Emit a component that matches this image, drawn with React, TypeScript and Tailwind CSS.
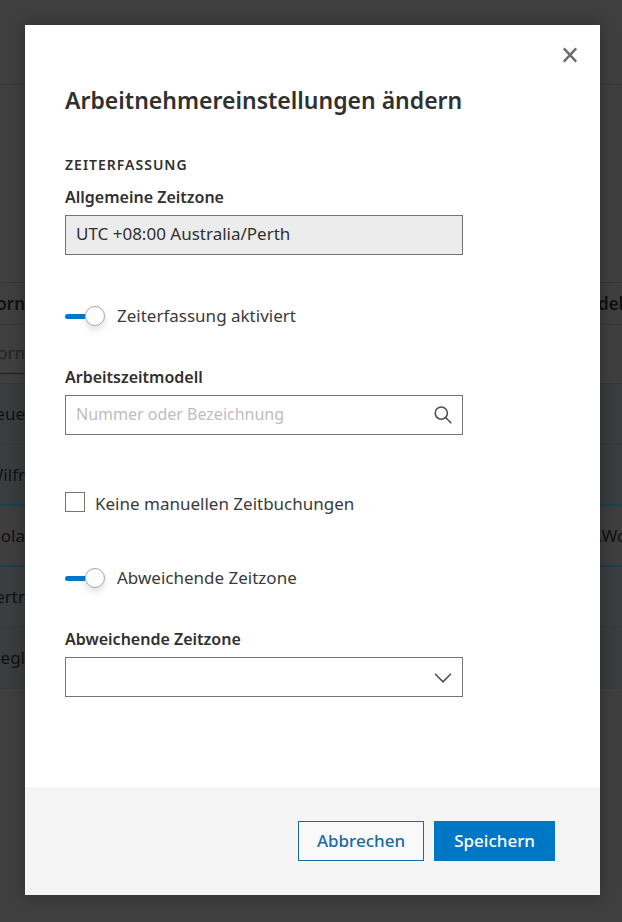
import { useState } from "react";
import { clsx } from "clsx";

const rows = [
  { name: "eue", model: "", tone: "bg-[#3a3d3f]", line: "border-[#383a3c]" },
  { name: "Wilfr", model: "", tone: "bg-[#3a3d3f]", line: "border-[#1b3e54]" },
  { name: "ola", model: ".Wo", tone: "bg-[#3e3e3e]", line: "border-[#1b3e54]" },
  { name: "ertr", model: "", tone: "bg-[#3b3d3f]", line: "border-[#383a3c]" },
  { name: "iegl", model: "", tone: "bg-[#3a3c3f]", line: "border-[#383a3c]" },
];

function EmployeeTable() {
  return (
    <div aria-hidden="true" className="min-h-screen overflow-hidden bg-[#3f3f3f] text-[17px] leading-6 text-[#101010]">
      <div className="h-[85px] border-b border-[#343434]" />
      <div className="mt-[197px] flex h-[43px] items-center justify-between border-y border-[#353535] font-semibold">
        <span className="flex w-[25px] justify-end">orn</span>
        <span className="w-6">del</span>
      </div>
      <div className="flex h-[59px] items-start border-b border-[#353535]">
        <span className="flex h-[49px] w-[25px] items-center justify-end border-b border-[#1c1c1c] pt-2 text-[#242424]">
          orn
        </span>
      </div>
      {rows.map((row) => (
        <div key={row.name} className={clsx("flex h-[61px] items-center justify-between border-b-2", row.tone, row.line)}>
          <span className="flex w-[25px] justify-end">{row.name}</span>
          <span className="w-6">{row.model}</span>
        </div>
      ))}
    </div>
  );
}

function Toggle({ id, label, checked, onChange }: { id: string; label: string; checked: boolean; onChange: (v: boolean) => void }) {
  return (
    <label htmlFor={id} className="flex w-fit cursor-pointer items-center gap-3">
      <input
        id={id}
        type="checkbox"
        role="switch"
        checked={checked}
        onChange={(e) => onChange(e.target.checked)}
        className="peer sr-only"
      />
      <span className={clsx("flex h-5 w-10 items-center", !checked && "flex-row-reverse")}>
        <span className={clsx("h-[5px] w-5 rounded-l-full", checked ? "bg-[#0077c5]" : "bg-[#b5b5b5]")} />
        <span className="h-5 w-5 rounded-full border border-[#a8a8a8] bg-white shadow-[0_4px_7px_rgba(0,0,0,0.12)]" />
      </span>
      {label}
    </label>
  );
}

const labelClass = "block text-base leading-6 font-semibold text-[#303030]";
const fieldClass =
  "block h-10 w-full appearance-none rounded-none border border-[#757575] px-2.5 pb-1 text-[17px] outline-none focus:border-[#0077c5]";

export default function App() {
  const [tracking, setTracking] = useState(true);
  const [ownZone, setOwnZone] = useState(true);

  return (
    <div className="relative font-['Noto_Sans',sans-serif]">
      <EmployeeTable />

      <div className="absolute inset-0 pt-[25px] pr-[22px] pl-[25px]">
        <form
          role="dialog"
          aria-labelledby="dialog-title"
          onSubmit={(e) => e.preventDefault()}
          className="bg-white text-[17px] leading-6 text-[#3a3a3a] shadow-[0_0_16px_rgba(0,0,0,0.3)]"
        >
          <div className="flex justify-end px-4 pt-4">
            <button type="button" aria-label="Schließen" className="flex h-7 w-7 items-center justify-center text-[#6b6b6b]">
              <svg viewBox="0 0 16 16" className="h-4 w-4" fill="none" stroke="currentColor" strokeWidth="2.4">
                <path d="M1.8 1.4 14.2 14.6M14.2 1.4 1.8 14.6" />
              </svg>
            </button>
          </div>

          <div className="px-10 pb-[90px]">
            <h1 id="dialog-title" className="mt-[15px] text-[23px] leading-8 font-semibold text-[#303030]">
              Arbeitnehmereinstellungen ändern
            </h1>

            <div className="max-w-[398px]">
              <h2 className="mt-[37px] text-sm leading-6 font-semibold tracking-[1px] text-[#303030] uppercase">
                Zeiterfassung
              </h2>

              <label htmlFor="zone" className={clsx(labelClass, "mt-2")}>
                Allgemeine Zeitzone
              </label>
              <input
                id="zone"
                readOnly
                value="UTC +08:00 Australia/Perth"
                className={clsx(fieldClass, "mt-1.5 bg-[#ececec] text-[#303030]")}
              />

              <div className="mt-[49px]">
                <Toggle id="tracking" label="Zeiterfassung aktiviert" checked={tracking} onChange={setTracking} />
              </div>

              <label htmlFor="model" className={clsx(labelClass, "mt-[37px]")}>
                Arbeitszeitmodell
              </label>
              <div className="relative mt-1.5">
                <input
                  id="model"
                  placeholder="Nummer oder Bezeichnung"
                  className={clsx(fieldClass, "bg-white placeholder:text-base placeholder:text-[#bdbdbd]")}
                />
                <svg
                  viewBox="0 0 18 18"
                  className="pointer-events-none absolute top-[11px] right-[11px] h-[18px] w-[18px] text-[#4f4f4f]"
                  fill="none"
                  stroke="currentColor"
                  strokeWidth="1.6"
                >
                  <circle cx="7.3" cy="7.1" r="6.1" />
                  <path d="m11.6 11.5 5.7 5.7" />
                </svg>
              </div>

              <label htmlFor="manual" className="mt-[57px] flex w-fit items-start gap-2.5">
                <input
                  id="manual"
                  type="checkbox"
                  className="h-5 w-5 appearance-none border border-[#757575] bg-white checked:bg-[#0077c5]"
                />
                Keine manuellen Zeitbuchungen
              </label>

              <div className="mt-[50px]">
                <Toggle id="own-zone" label="Abweichende Zeitzone" checked={ownZone} onChange={setOwnZone} />
              </div>

              <label htmlFor="zone-select" className={clsx(labelClass, "mt-[37px]")}>
                Abweichende Zeitzone
              </label>
              <div className="relative mt-1.5">
                <select id="zone-select" defaultValue="" className={clsx(fieldClass, "bg-white")}>
                  <option value="" />
                </select>
                <svg
                  viewBox="0 0 18 10"
                  className="pointer-events-none absolute top-4 right-[11px] h-2.5 w-[18px] text-[#4f4f4f]"
                  fill="none"
                  stroke="currentColor"
                  strokeWidth="1.6"
                >
                  <path d="m1 .8 8 8 8-8" />
                </svg>
              </div>
            </div>
          </div>

          <div className="flex justify-end gap-2.5 bg-[#f5f5f5] py-[34px] pr-[45px] pl-10 font-medium">
            <button type="button" className="h-10 border border-[#1a6ba3] bg-white/40 px-[18px] text-[#1a6ba3]">
              Abbrechen
            </button>
            <button type="submit" className="h-10 bg-[#0077c5] px-5 text-white">
              Speichern
            </button>
          </div>
        </form>
      </div>
    </div>
  );
}
